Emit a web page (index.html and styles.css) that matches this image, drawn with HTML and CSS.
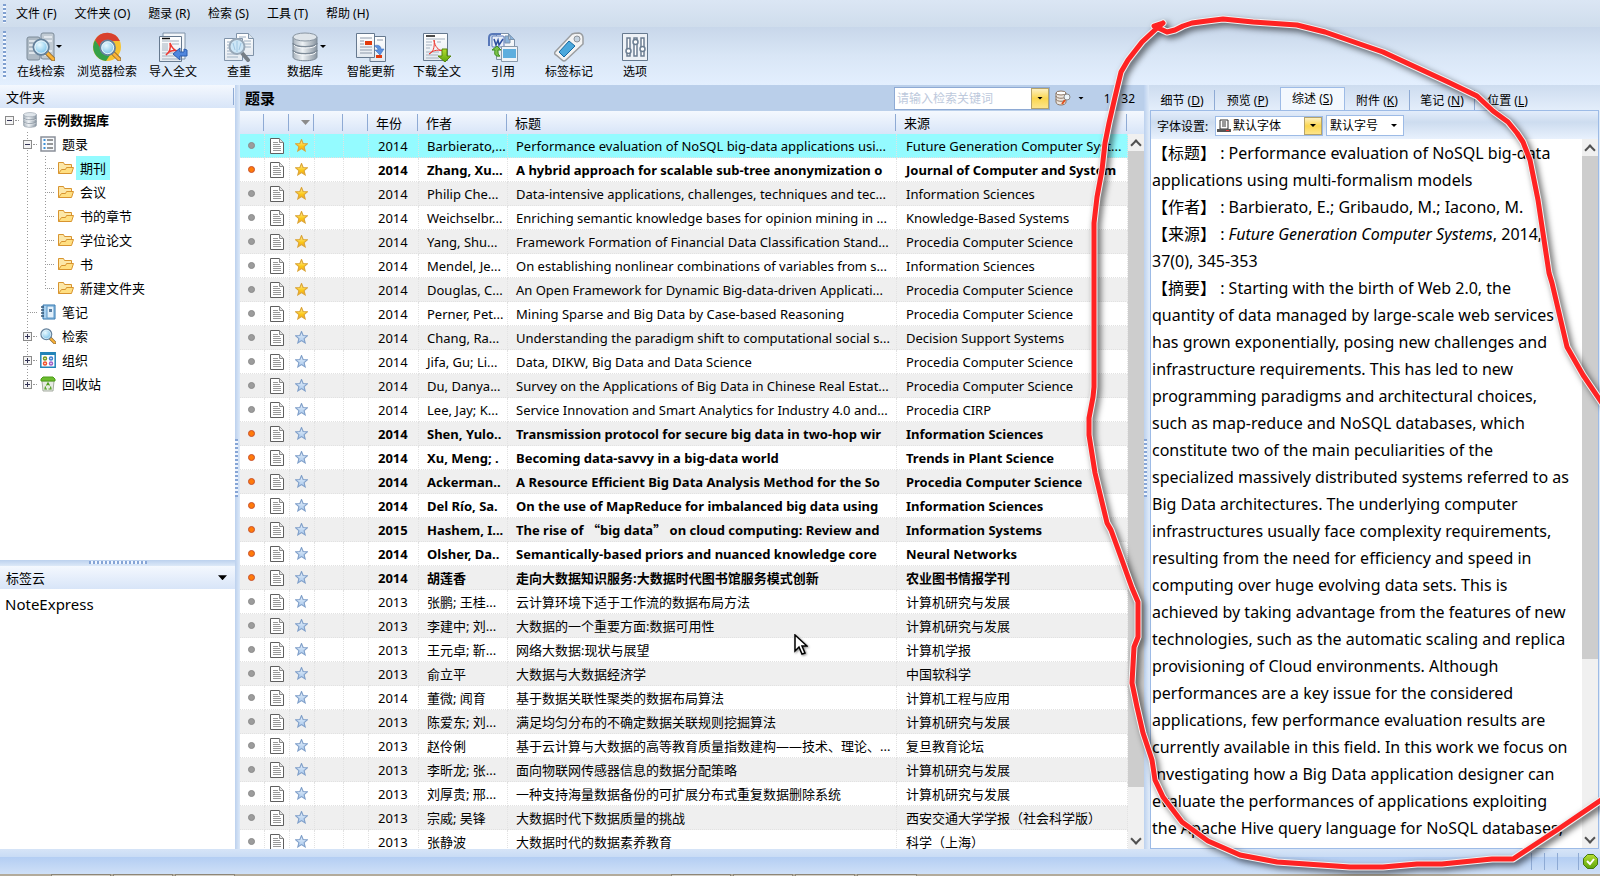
FILE: index.html
```html
<!DOCTYPE html>
<html lang="zh-CN">
<head>
    <meta charset="UTF-8">
    <meta name="viewport" content="width=device-width, initial-scale=1.0">
    <title>NoteExpress</title>
    <link rel="stylesheet" href="styles.css">
</head>
<body>
    <!-- shared icons -->
    <svg class="sprite" width="0" height="0" aria-hidden="true">
        <defs>
            <linearGradient id="g-metal" x1="0" x2="1" y1="0" y2="0">
                <stop offset="0" stop-color="#a9b3bd"/><stop offset=".4" stop-color="#eef2f5"/><stop offset="1" stop-color="#8995a1"/>
            </linearGradient>
            <linearGradient id="g-paper" x1="0" x2="0" y1="0" y2="1">
                <stop offset="0" stop-color="#fff"/><stop offset="1" stop-color="#e3e9f0"/>
            </linearGradient>
            <radialGradient id="g-glass" cx=".4" cy=".35" r=".7">
                <stop offset="0" stop-color="#e8f9ff"/><stop offset="1" stop-color="#6dbbe6"/>
            </radialGradient>
            <linearGradient id="g-gold" x1="0" x2="0" y1="0" y2="1">
                <stop offset="0" stop-color="#fff3a0"/><stop offset=".6" stop-color="#fcc917"/><stop offset="1" stop-color="#f0a020"/>
            </linearGradient>
            <linearGradient id="g-blue" x1="0" x2="0" y1="0" y2="1">
                <stop offset="0" stop-color="#e9f2fb"/><stop offset="1" stop-color="#a5c6ec"/>
            </linearGradient>
            <linearGradient id="g-green" x1="0" x2="0" y1="0" y2="1">
                <stop offset="0" stop-color="#b5dd31"/><stop offset="1" stop-color="#5da50b"/>
            </linearGradient>
        </defs>

        <symbol id="i-db" viewBox="0 0 26 30">
            <path d="M1 5v20c0 5 24 5 24 0V5z" fill="url(#g-metal)" stroke="#7d8a97"/>
            <path d="M1 11c0 5 24 5 24 0M1 18c0 5 24 5 24 0" fill="none" stroke="#7d8a97" stroke-width="1.5"/>
            <path d="M2 13c1 4 22 4 22 0M2 20c1 4 22 4 22 0" fill="none" stroke="#f6f8fa"/>
            <ellipse cx="13" cy="5" rx="12" ry="4" fill="#dfe5ea" stroke="#8a96a2"/>
        </symbol>
        <symbol id="i-glass" viewBox="0 0 24 24">
            <path d="M15 15l7 7" stroke="#8d6a35" stroke-width="5" stroke-linecap="round"/>
            <path d="M16 16l6 6" stroke="#fbb338" stroke-width="3" stroke-linecap="round"/>
            <circle cx="9.500" cy="9.500" r="8" fill="url(#g-glass)" stroke="#66829c" stroke-width="2"/>
            <circle cx="9.500" cy="9.500" r="6.500" fill="none" stroke="#f1f8fc"/>
        </symbol>
        <symbol id="i-online" viewBox="0 0 30 30">
            <rect x="1" y="5" width="13" height="23" rx="2" fill="#aebac5" stroke="#7c8b99"/>
            <rect x="15" y="1" width="13" height="26" rx="2" fill="#c1cbd4" stroke="#7c8b99"/>
            <path d="M3 9h8M3 13h8M3 17h8M3 21h8M18 5h8M18 9h8M18 19h8M18 23h8" stroke="#edf2f6" stroke-width="1.500"/>
            <use href="#i-glass" x="6" y="6" width="23" height="23"/>
        </symbol>
        <symbol id="i-browser" viewBox="0 0 30 30">
            <circle cx="15" cy="15" r="14" fill="#f6c332"/>
            <path d="M3 8A14 14 0 0 1 28 9H15L8 17z" fill="#d8412f"/>
            <path d="M3 8A14 14 0 0 0 14 29L20 20 9 17z" fill="#34a048"/>
            <circle cx="15" cy="15" r="7" fill="#e8f4fb"/>
            <use href="#i-glass" x="7" y="7" width="22" height="22"/>
        </symbol>
        <symbol id="i-import" viewBox="0 0 30 30">
            <path d="M5 1h22v26H5z" fill="#f4f7fa" stroke="#7f92a8"/>
            <path d="M1.500 4.500h22v25h-22z" fill="url(#g-paper)" stroke="#66798f"/>
            <path d="M4 6.500h8" stroke="#111" stroke-width="1.500"/>
            <path d="M4 9h17M4 12h6M4 14h6M4 16h6M4 18h6M4 21h17M4 24h17M4 27h17M14 12h7" stroke="#a4b1bf"/>
            <path d="M12 11c2 5 5 8 8 8-4-1-9 0-12 4 3-2 5-6 4-12z" fill="none" stroke="#ee3b33" stroke-width="1.500"/>
            <path d="M29 18v6h-7v4l-7-6 7-6v4h4v-3z" fill="#4f86dd" stroke="#2b5cae"/>
        </symbol>
        <symbol id="i-check" viewBox="0 0 30 30">
            <path d="M12.500 1.500h12l5 5v17h-17z" fill="url(#g-paper)" stroke="#7f92a8"/>
            <path d="M24.500 1.500v5h5" fill="#dce5ee" stroke="#7f92a8"/>
            <path d="M.500 6.500h18v22H.500z" fill="url(#g-paper)" stroke="#7f92a8"/>
            <path d="M15 5h7M20 9h7M21 12h6M21 15h6M3 10h4M3 13h3M3 16h3M3 19h4M3 22h11M3 25h11" stroke="#9eb0c2"/>
            <path d="M18 21l6 7" stroke="#767e86" stroke-width="4" stroke-linecap="round"/>
            <circle cx="13" cy="14.500" r="7.500" fill="#cde6f7" stroke="#98a8b8" stroke-width="2"/>
            <path d="M13 9v11M9 11l2 7M17 11l-2 7" stroke="#a0c6e2"/>
        </symbol>
        <symbol id="i-update" viewBox="0 0 30 30">
            <path d="M14 4.500h15.500v25H14z" fill="url(#g-paper)" stroke="#66798f"/>
            <path d="M.500 1.500h18v24H.500z" fill="url(#g-paper)" stroke="#66798f"/>
            <path d="M4 6h12M4 9h4M4 12h4M4 15h12M4 18h12M4 21h12M21 8h6" stroke="#8e9aab"/>
            <path d="M9 9h7v4H9zM20 23h6v3h-6z" fill="#e23a0c"/>
            <path d="M18 14c4-2 7 0 7 3h3l-4 6-5-5h3c0-2-2-3-4-4z" fill="#5c90df" stroke="#2d63b5" stroke-width=".500"/>
        </symbol>
        <symbol id="i-download" viewBox="0 0 30 30">
            <path d="M1.500 1.500h24v27h-24z" fill="url(#g-paper)" stroke="#66798f"/>
            <path d="M4 4h9" stroke="#111" stroke-width="1.500"/>
            <path d="M4 7h19M4 10h6M4 13h6M4 16h4M15 10h4M4 20h13M4 23h12M4 26h13" stroke="#a4b1bf"/>
            <path d="M12 8c1 7 4 10 9 11-6-2-11 0-14 3 4-1 6-7 5-14z" fill="none" stroke="#ee3b33" stroke-width="1"/>
            <path d="M20 17h5v7h4l-6 6-7-6h4z" fill="url(#g-green)" stroke="#55850a"/>
        </symbol>
        <symbol id="i-cite" viewBox="0 0 30 30">
            <path d="M8.500 1.500h12l6 6v20h-18z" fill="url(#g-paper)" stroke="#7f92a8"/>
            <path d="M20.500 1.500v6h6M17 4h5v7h-5z" fill="#8bb2da" stroke="#7b93ac"/>
            <path d="M1 14V6q0-4 4-4h8" fill="none" stroke="#5878b9" stroke-width="2"/>
            <rect x="4" y="4" width="12" height="11" rx="1" fill="#e8eef8" stroke="#5878b9"/>
            <path d="M6 7l2 6 2-5 1 5 4-6" fill="none" stroke="#2b4e9e" stroke-width="1.500"/>
            <path d="M12 24c-5 1-6-2-5-6H4l5-4 4 4h-3c0 3 0 5 2 6z" fill="#79c04a" stroke="#3c8d1f"/>
            <path d="M13.500 14.500h16v15h-16z" fill="#f0f4f8" stroke="#8999aa"/>
            <path d="M15 17h13v9H15z" fill="#5eaede"/>
        </symbol>
        <symbol id="i-tag" viewBox="0 0 30 30">
            <path d="M1 20L18 2q2-1 7-1 4 1 4 5v6L12 28q-2 2-4 0l-6-5q-2-1-1-3z" fill="#f3f3f3" stroke="#9a9da0" stroke-width="1.500"/>
            <circle cx="23" cy="7" r="3" fill="#c5d3e0" stroke="#8c9299"/>
            <path d="M5 20L15 9l6 5-11 11z" fill="#4ba8dc" stroke="#1769a0"/>
        </symbol>
        <symbol id="i-option" viewBox="0 0 30 30">
            <path d="M2.500 1.500h25v27h-25z" fill="#eef2f7" stroke="#66798f"/>
            <g fill="#fff" stroke="#6c7e92" stroke-width="1.500">
                <path d="M7 6h3v18H7zM14 6h3v18h-3zM21 6h3v18h-3z"/>
                <circle cx="8.500" cy="19" r="2.500"/><circle cx="15.500" cy="10" r="2.500"/><circle cx="22.500" cy="17" r="2.500"/>
            </g>
        </symbol>
        <symbol id="i-list" viewBox="0 0 16 16">
            <path d="M1 1h14v14H1z" fill="#f8fafc" stroke="#8a9099" stroke-width="1.500"/>
            <path d="M7 4h6M7 8h6M7 12h6" stroke="#333"/>
            <path d="M3.500 3h2v2h-2zM3.500 7h2v2h-2zM3.500 11h2v2h-2z" fill="#3c8fd6"/>
        </symbol>
        <symbol id="i-folder" viewBox="0 0 16 14">
            <path d="M.500 12.500v-11h5l1 2h7v3" fill="#fce7a8" stroke="#d8942f"/>
            <path d="M.500 12.500l3-4h4l1-2h7l-2 6z" fill="#ffdf82" stroke="#d8942f"/>
        </symbol>
        <symbol id="i-note" viewBox="0 0 16 16">
            <path d="M3 1h12v14H3z" fill="#a9d0ee" stroke="#2f74ae"/>
            <path d="M7 2h7v12H7z" fill="#e4f1fb" stroke="#5b97c8"/>
            <path d="M9 5h3v3H9z" fill="#5a7fa3"/>
            <path d="M1 3h3M1 6h3M1 9h3M1 12h3" stroke="#39597a" stroke-width="1.500"/>
        </symbol>
        <symbol id="i-group" viewBox="0 0 16 16">
            <path d="M.800.800h14.400v14.400H.800z" fill="#fff" stroke="#2384b8" stroke-width="1.500"/>
            <path d="M1 1h14v2H1z" fill="#2384b8"/>
            <g fill="none" stroke-width="1.500">
                <circle cx="5" cy="6.500" r="1.500" stroke="#7a9a1e"/><circle cx="11" cy="6.500" r="1.500" stroke="#3f7ed0"/>
                <circle cx="5" cy="11.500" r="1.500" stroke="#f0532d"/><circle cx="11" cy="11.500" r="1.500" stroke="#a25fc4"/>
            </g>
        </symbol>
        <symbol id="i-bin" viewBox="0 0 16 16">
            <path d="M2 5h12l-1 10H3z" fill="#e6eae3" stroke="#a5aca0"/>
            <path d="M1 5V3l2-2h10l2 2v2z" fill="#6cbc2e" stroke="#4c9d19"/>
            <path d="M6.500 9.500L8 7l1.500 2.500M10.500 10.500L11 13H8.500M5.500 10.500L5 13h2" fill="none" stroke="#4c9d19" stroke-width="1.200"/>
        </symbol>
        <symbol id="i-doc" viewBox="0 0 14 16">
            <path d="M.500.500h9l4 4v11H.500z" fill="#fff" stroke="#5f5f5f"/>
            <path d="M9.500.500v4h4" fill="#e6e6e6" stroke="#8a8a8a"/>
            <path d="M3 4.500h5M3 6.500h7M3 8.500h8M3 10.500h8M3 12.500h8" stroke="#999"/>
        </symbol>
        <symbol id="i-star" viewBox="0 0 12 12">
            <path d="M6 .500l1.500 3.700 4 .2-3.100 2.600 1 4L6 8.800 2.600 11l1-4L.500 4.400l4-.2z"/>
        </symbol>
        <symbol id="i-dbsearch" viewBox="0 0 16 16">
            <path d="M1 3v9c0 4 10 4 10 0V3z" fill="#eee7df" stroke="#8c7664"/>
            <path d="M1 6c0 3 10 3 10 0M1 9c0 3 10 3 10 0" fill="none" stroke="#8c7664"/>
            <ellipse cx="6" cy="3" rx="5" ry="2" fill="#fff" stroke="#8c7664"/>
            <path d="M10 10l-3 4" stroke="#e0501e" stroke-width="2"/>
            <circle cx="12" cy="7" r="3" fill="#edf5fa" stroke="#888"/>
        </symbol>
        <symbol id="i-printer" viewBox="0 0 14 14">
            <path d="M3 1h8v9H3z" fill="#fff" stroke="#333"/>
            <path d="M5 3h4M5 5h4M5 7h4" stroke="#333"/>
            <path d="M0 10h14v3H0z" fill="#555"/><path d="M9 11h3v1H9z" fill="#e33"/>
        </symbol>
        <symbol id="i-ok" viewBox="0 0 15 15">
            <path d="M4.500.500h6l4 4v6l-4 4h-6l-4-4v-6z" fill="url(#g-green)" stroke="#447710"/>
            <path d="M4 7l3 3 4-5" fill="none" stroke="#fff" stroke-width="2"/>
        </symbol>
    </svg>

    <div class="app">
        <nav class="menubar">
            <span class="grip"></span>
            <button>文件 (F)</button>
            <button>文件夹 (O)</button>
            <button>题录 (R)</button>
            <button>检索 (S)</button>
            <button>工具 (T)</button>
            <button>帮助 (H)</button>
        </nav>

        <div class="toolbar">
            <span class="grip"></span>
            <button class="drop"><svg><use href="#i-online"/></svg>在线检索</button>
            <button><svg><use href="#i-browser"/></svg>浏览器检索</button>
            <button><svg><use href="#i-import"/></svg>导入全文</button>
            <button><svg><use href="#i-check"/></svg>查重</button>
            <button class="drop"><svg><use href="#i-db"/></svg>数据库</button>
            <button><svg><use href="#i-update"/></svg>智能更新</button>
            <button><svg><use href="#i-download"/></svg>下载全文</button>
            <button><svg><use href="#i-cite"/></svg>引用</button>
            <button><svg><use href="#i-tag"/></svg>标签标记</button>
            <button><svg><use href="#i-option"/></svg>选项</button>
        </div>

        <main class="main">
            <aside class="sidebar">
                <h2 class="panel-head">文件夹</h2>
                <ul class="tree">
                    <li class="root"><div class="node"><i class="toggle minus"></i><svg><use href="#i-db"/></svg><b>示例数据库</b></div>
                        <ul>
                            <li><div class="node"><i class="toggle minus"></i><svg><use href="#i-list"/></svg><span>题录</span></div>
                                <ul class="folders">
                                    <li class="node"><svg><use href="#i-folder"/></svg><span class="selected">期刊</span></li>
                                    <li class="node"><svg><use href="#i-folder"/></svg><span>会议</span></li>
                                    <li class="node"><svg><use href="#i-folder"/></svg><span>书的章节</span></li>
                                    <li class="node"><svg><use href="#i-folder"/></svg><span>学位论文</span></li>
                                    <li class="node"><svg><use href="#i-folder"/></svg><span>书</span></li>
                                    <li class="node"><svg><use href="#i-folder"/></svg><span>新建文件夹</span></li>
                                </ul>
                            </li>
                            <li><div class="node"><i class="toggle none"></i><svg><use href="#i-note"/></svg><span>笔记</span></div></li>
                            <li><div class="node"><i class="toggle plus"></i><svg><use href="#i-glass"/></svg><span>检索</span></div></li>
                            <li><div class="node"><i class="toggle plus"></i><svg><use href="#i-group"/></svg><span>组织</span></div></li>
                            <li><div class="node"><i class="toggle plus"></i><svg><use href="#i-bin"/></svg><span>回收站</span></div></li>
                        </ul>
                    </li>
                </ul>
                <div class="hsplit"></div>
                <section class="tags">
                    <h2 class="panel-head">标签云<i class="caret"></i></h2>
                    <a class="tag" href="#">NoteExpress</a>
                </section>
            </aside>

            <div class="vsplit"></div>

            <section class="list">
                <header class="list-head">
                    <h1>题录</h1>
                    <div class="search">
                        <input type="text" placeholder="请输入检索关键词" aria-label="请输入检索关键词">
                        <button class="yellow" aria-label="展开"><i class="caret"></i></button>
                    </div>
                    <button class="find" aria-label="检索"><svg><use href="#i-dbsearch"/></svg><i class="caret"></i></button>
                    <span class="count">1 / 32</span>
                </header>
                <div class="list-body">
                    <table class="grid">
                        <colgroup>
                            <col class="c-icon"><col class="c-icon"><col class="c-icon"><col class="c-flag"><col class="c-icon">
                            <col class="c-year"><col class="c-author"><col><col class="c-source">
                        </colgroup>
                        <thead>
                            <tr><th></th><th></th><th class="sorted"><i class="caret"></i></th><th></th><th></th><th>年份</th><th>作者</th><th>标题</th><th>来源</th></tr>
                        </thead>
                        <tbody id="rows"></tbody>
                    </table>
                    <div class="scroll grid-scroll"><i class="up"></i><span class="thumb"></span><i class="down"></i></div>
                </div>
                <svg class="pointer" viewBox="0 0 14 21"><path d="M1 1v16l4-4 3 7 3-1-3-7h5z" fill="#fff" stroke="#000" stroke-width="1.500"/></svg>
            </section>

            <div class="vsplit"></div>

            <section class="detail">
                <div class="tabs" role="tablist">
                    <button role="tab">细节 (<u>D</u>)</button>
                    <button role="tab">预览 (<u>P</u>)</button>
                    <button role="tab" class="active" aria-selected="true">综述 (<u>S</u>)</button>
                    <button role="tab">附件 (<u>K</u>)</button>
                    <button role="tab">笔记 (<u>N</u>)</button>
                    <button role="tab">位置 (<u>L</u>)</button>
                </div>
                <div class="pane">
                    <div class="fontbar">
                        <label for="font">字体设置:</label>
                        <div class="combo face">
                            <svg><use href="#i-printer"/></svg>
                            <select id="font"><option>默认字体</option></select>
                            <span class="yellow"><i class="caret"></i></span>
                        </div>
                        <div class="combo size">
                            <select aria-label="默认字号"><option>默认字号</option></select>
                            <i class="caret"></i>
                        </div>
                    </div>
                    <div class="review">
                        <p>【标题】 : Performance evaluation of NoSQL big-data<br>
                        applications using multi-formalism models<br>
                        【作者】 : Barbierato, E.; Gribaudo, M.; Iacono, M.<br>
                        【来源】 : <em>Future Generation Computer Systems</em>, 2014,<br>
                        37(0), 345-353<br>
                        【摘要】 : Starting with the birth of Web 2.0, the<br>
                        quantity of data managed by large-scale web services<br>
                        has grown exponentially, posing new challenges and<br>
                        infrastructure requirements. This has led to new<br>
                        programming paradigms and architectural choices,<br>
                        such as map-reduce and NoSQL databases, which<br>
                        constitute two of the main peculiarities of the<br>
                        specialized massively distributed systems referred to as<br>
                        Big Data architectures. The underlying computer<br>
                        infrastructures usually face complexity requirements,<br>
                        resulting from the need for efficiency and speed in<br>
                        computing over huge evolving data sets. This is<br>
                        achieved by taking advantage from the features of new<br>
                        technologies, such as the automatic scaling and replica<br>
                        provisioning of Cloud environments. Although<br>
                        performances are a key issue for the considered<br>
                        applications, few performance evaluation results are<br>
                        currently available in this field. In this work we focus on<br>
                        investigating how a Big Data application designer can<br>
                        evaluate the performances of applications exploiting<br>
                        the Apache Hive query language for NoSQL databases,</p>
                        <div class="scroll review-scroll"><i class="up"></i><span class="thumb"></span><i class="down"></i></div>
                    </div>
                </div>
            </section>
        </main>

        <footer class="statusbar"><i></i><i></i><i></i><i></i><svg><use href="#i-ok"/></svg></footer>
        <div class="taskbar">
            <div><i></i><i></i><i></i></div>
            <div><i></i><i></i><i></i><i></i></div>
        </div>
    </div>

    <!-- hand-drawn marker round the detail pane -->
    <svg class="marker" viewBox="0 0 530 876" aria-hidden="true">
        <defs>
            <path id="ring" d="M93 23L84 26L97 32L105 30L113 26L122 23L137 21L153 19L183 22L227 25L255 32L313 52L378 82L407 96L423 111L438 122L447 133L453 142L460 160L468 200L471 220L479 273L482 283L497 347L513 375L534 406M93 23L87 28L72 42L58 60L51 72L45 97L39 123L35 143L32 170L27 197L24 223L24 387L23 397L19 418L19 435L25 473L37 523L41 530L53 563L62 588L68 602L68 637L64 647L62 683L67 707L73 733L82 760L85 780L93 797L112 822L138 841L170 855L207 862L280 867L313 867L347 864L372 864L422 859L443 859L487 830L534 798"/>
        </defs>
        <g fill="none" stroke-linejoin="round" stroke-linecap="round">
            <use href="#ring" stroke="#f1f1f1" stroke-width="7"/>
            <use href="#ring" stroke="#ff2323" stroke-width="5"/>
        </g>
    </svg>

    <script>
        // [unread, starred, year, author, title, source]
        const records = [
            [0, 1, 2014, 'Barbierato,...', 'Performance evaluation of NoSQL big-data applications usi...', 'Future Generation Computer Syst...'],
            [1, 1, 2014, 'Zhang, Xu...', 'A hybrid approach for scalable sub-tree anonymization o', 'Journal of Computer and System'],
            [0, 1, 2014, 'Philip Che...', 'Data-intensive applications, challenges, techniques and tec...', 'Information Sciences'],
            [0, 1, 2014, 'Weichselbr...', 'Enriching semantic knowledge bases for opinion mining in ...', 'Knowledge-Based Systems'],
            [0, 1, 2014, 'Yang, Shu...', 'Framework Formation of Financial Data Classification Stand...', 'Procedia Computer Science'],
            [0, 1, 2014, 'Mendel, Je...', 'On establishing nonlinear combinations of variables from s...', 'Information Sciences'],
            [0, 1, 2014, 'Douglas, C...', 'An Open Framework for Dynamic Big-data-driven Applicati...', 'Procedia Computer Science'],
            [0, 1, 2014, 'Perner, Pet...', 'Mining Sparse and Big Data by Case-based Reasoning', 'Procedia Computer Science'],
            [0, 0, 2014, 'Chang, Ra...', 'Understanding the paradigm shift to computational social s...', 'Decision Support Systems'],
            [0, 0, 2014, 'Jifa, Gu; Li...', 'Data, DIKW, Big Data and Data Science', 'Procedia Computer Science'],
            [0, 0, 2014, 'Du, Danya...', 'Survey on the Applications of Big Data in Chinese Real Estat...', 'Procedia Computer Science'],
            [0, 0, 2014, 'Lee, Jay; K...', 'Service Innovation and Smart Analytics for Industry 4.0 and...', 'Procedia CIRP'],
            [1, 0, 2014, 'Shen, Yulo..', 'Transmission protocol for secure big data in two-hop wir', 'Information Sciences'],
            [1, 0, 2014, 'Xu, Meng; .', 'Becoming data-savvy in a big-data world', 'Trends in Plant Science'],
            [1, 0, 2014, 'Ackerman..', 'A Resource Efficient Big Data Analysis Method for the So', 'Procedia Computer Science'],
            [1, 0, 2014, 'Del Río, Sa.', 'On the use of MapReduce for imbalanced big data using', 'Information Sciences'],
            [1, 0, 2015, 'Hashem, I...', 'The rise of <span class="quote">“</span>big data<span class="quote">”</span> on cloud computing: Review and', 'Information Systems'],
            [1, 0, 2014, 'Olsher, Da..', 'Semantically-based priors and nuanced knowledge core', 'Neural Networks'],
            [1, 0, 2014, '胡莲香', '走向大数据知识服务:大数据时代图书馆服务模式创新', '农业图书情报学刊'],
            [0, 0, 2013, '张鹏; 王桂...', '云计算环境下适于工作流的数据布局方法', '计算机研究与发展'],
            [0, 0, 2013, '李建中; 刘...', '大数据的一个重要方面:数据可用性', '计算机研究与发展'],
            [0, 0, 2013, '王元卓; 靳...', '网络大数据:现状与展望', '计算机学报'],
            [0, 0, 2013, '俞立平', '大数据与大数据经济学', '中国软科学'],
            [0, 0, 2014, '董微; 闻育', '基于数据关联性聚类的数据布局算法', '计算机工程与应用'],
            [0, 0, 2013, '陈爱东; 刘...', '满足均匀分布的不确定数据关联规则挖掘算法', '计算机研究与发展'],
            [0, 0, 2013, '赵伶俐', '基于云计算与大数据的高等教育质量指数建构——技术、理论、...', '复旦教育论坛'],
            [0, 0, 2013, '李昕龙; 张...', '面向物联网传感器信息的数据分配策略', '计算机研究与发展'],
            [0, 0, 2013, '刘厚贵; 邢...', '一种支持海量数据备份的可扩展分布式重复数据删除系统', '计算机研究与发展'],
            [0, 0, 2013, '宗威; 吴锋', '大数据时代下数据质量的挑战', '西安交通大学学报（社会科学版）'],
            [0, 0, 2013, '张静波', '大数据时代的数据素养教育', '科学（上海）']
        ];

        document.getElementById('rows').innerHTML = records.map(([unread, starred, year, author, title, source]) => `
            <tr class="${unread ? 'unread' : ''}">
                <td><i class="dot"></i></td>
                <td><svg class="doc"><use href="#i-doc"/></svg></td>
                <td><svg class="star ${starred ? 'on' : ''}"><use href="#i-star"/></svg></td>
                <td></td><td></td>
                <td>${year}</td><td>${author}</td><td>${title}</td><td>${source}</td>
            </tr>`).join('');
    </script>
</body>
</html>
```

FILE: styles.css
```css
* {
    box-sizing: border-box;
}

body {
    margin: 0;
    height: 100vh;
    overflow: hidden;
    position: relative;
    font-family: "Noto Sans", "Noto Sans CJK SC", sans-serif;
    font-size: 13px;
    color: #000;
}

button, input, select {
    font: inherit;
    color: inherit;
    margin: 0;
    padding: 0;
    border: 0;
    background: none;
    border-radius: 0;
}

h1, h2, p, ul {
    margin: 0;
    padding: 0;
    list-style: none;
    font-weight: normal;
}

.sprite {
    position: absolute;
}

.app {
    display: flex;
    flex-direction: column;
    height: 100%;
}

.caret {
    display: block;
    width: 6px;
    height: 3px;
    background: #000;
    clip-path: polygon(0 0, 100% 0, 50% 100%);
}

/* menu and toolbar */
.grip {
    width: 3px;
    align-self: stretch;
    margin: 4px 4px 4px 3px;
    background: repeating-linear-gradient(#7f9fd0 0 2px, #f3f8ff 2px 4px);
}

.menubar {
    display: flex;
    align-items: center;
    height: 27px;
    flex: none;
    font-size: 12px;
    background: linear-gradient(#dbe6f4, #cfddec);
}

.menubar button {
    padding: 0 8px;
    margin-left: 2px;
    line-height: 24px;
}

.menubar .grip {
    margin-right: 0;
}

.toolbar {
    display: flex;
    height: 58px;
    flex: none;
    font-size: 12px;
    background: linear-gradient(#c8d7ea, #d9e6f6 50%, #e3effe);
}

.toolbar .grip {
    margin: 4px 2px 6px 3px;
}

.toolbar button {
    position: relative;
    width: 66px;
    display: flex;
    flex-direction: column;
    align-items: center;
    padding-top: 5px;
    line-height: 18px;
    white-space: nowrap;
}

.toolbar svg {
    width: 30px;
    height: 30px;
    margin-bottom: 1px;
}

.toolbar .drop::after {
    content: "";
    position: absolute;
    left: 48px;
    top: 18px;
    width: 6px;
    height: 3px;
    background: #000;
    clip-path: polygon(0 0, 100% 0, 50% 100%);
}

/* three panes */
.main {
    display: flex;
    flex: 1;
    min-height: 0;
    background: #fff;
}

.vsplit {
    flex: none;
    width: 5px;
    background: linear-gradient(90deg, #bcd1ee, #dde9f8);
    display: flex;
    align-items: center;
}

.vsplit::before {
    content: "";
    width: 3px;
    height: 58px;
    margin-top: 2px;
    background: repeating-linear-gradient(#86a5d6 0 2px, #f0f6ff 2px 4px);
}

.sidebar {
    width: 235px;
    flex: none;
    display: flex;
    flex-direction: column;
}

.panel-head {
    display: flex;
    align-items: center;
    justify-content: space-between;
    height: 23px;
    padding: 0 8px 0 6px;
    font-size: 13px;
    background: linear-gradient(#8eaad4, #8eaad4) calc(100% - 1px) 50% / 1px 17px no-repeat, linear-gradient(#f4f8fe, #d8e5f8);
}

.tags .panel-head {
    background: linear-gradient(#f4f8fe, #d8e5f8);
}

.panel-head .caret {
    width: 9px;
    height: 5px;
}

.tree {
    flex: 1;
    min-height: 0;
    overflow: hidden;
}

.node {
    display: flex;
    align-items: center;
    height: 24px;
    white-space: nowrap;
}

.node svg {
    width: 16px;
    height: 16px;
    flex: none;
    margin-right: 2px;
}

.node span, .node b {
    padding: 0 4px;
    line-height: 24px;
}

.node .selected {
    background: #94fbff;
}

.root > .node {
    padding-left: 5px;
}

.root > ul {
    margin-left: 27px;
    background: repeating-linear-gradient(#999 0 1px, transparent 1px 3px) 0 0 / 1px calc(100% - 12px) no-repeat;
}

.root > ul .toggle {
    margin-left: -4px;
}

.toggle {
    position: relative;
    width: 9px;
    height: 9px;
    flex: none;
    margin-right: 8px;
    border: 1px solid #8a8a8a;
    background: linear-gradient(#335, #335) center / 5px 1px no-repeat, #f4f4f4;
}

.toggle::after {
    content: "";
    position: absolute;
    left: 9px;
    top: 3px;
    width: 4px;
    border-top: 1px dotted #999;
}

.toggle.plus {
    background: linear-gradient(#335, #335) center / 5px 1px no-repeat, linear-gradient(#335, #335) center / 1px 5px no-repeat, #f4f4f4;
}

.toggle.none {
    border-color: transparent;
    background: none;
}

.toggle.none::after {
    left: 3px;
    width: 10px;
}

.folders {
    margin-left: 18px;
    background: repeating-linear-gradient(#999 0 1px, transparent 1px 3px) 0 0 / 1px calc(100% - 12px) no-repeat;
}

.folders .node::before {
    content: "";
    width: 9px;
    margin-right: 4px;
    border-top: 1px dotted #999;
}

.folders svg {
    height: 14px;
}

.hsplit {
    height: 6px;
    flex: none;
    display: flex;
    justify-content: center;
    background: linear-gradient(#bcd1ee, #dde9f8);
}

.hsplit::before {
    content: "";
    width: 58px;
    height: 3px;
    margin-top: 1px;
    background: repeating-linear-gradient(90deg, #86a5d6 0 2px, #f0f6ff 2px 4px);
}

.tags {
    height: 37%;
    flex: none;
}

.tag {
    display: block;
    padding: 3px 5px;
    font-size: 15px;
    line-height: 24px;
    color: inherit;
    text-decoration: none;
}

/* record list */
.list {
    position: relative;
    flex: 1;
    min-width: 0;
    display: flex;
    flex-direction: column;
}

.list-head {
    display: flex;
    align-items: center;
    height: 26px;
    flex: none;
    padding: 0 9px 0 5px;
    background: #bacfea;
}

.list-head h1 {
    flex: 1;
    font-size: 15px;
    line-height: 22px;
    font-weight: bold;
}

.search {
    display: flex;
    width: 156px;
    height: 23px;
    border: 1px solid #8eaad4;
    background: #fff;
}

.search input {
    flex: 1;
    min-width: 0;
    padding-left: 2px;
    font-size: 12px;
}

.search input::placeholder {
    color: #bdc9dc;
}

.yellow {
    width: 18px;
    flex: none;
    display: flex;
    align-items: center;
    justify-content: center;
    border: 1px solid #b5a36b;
    background: linear-gradient(#fdf0c0, #fbd64f 50%, #fde58b);
}

.find {
    display: flex;
    align-items: center;
    gap: 7px;
    margin-left: 5px;
}

.find svg {
    width: 16px;
    height: 16px;
}

.count {
    width: 51px;
    text-align: right;
    font-size: 12px;
}

.list-body {
    flex: 1;
    min-height: 0;
    display: flex;
    overflow: hidden;
    background: linear-gradient(#f4f8fe, #d8e5f8) 0 0 / 100% 23px no-repeat;
}

.grid {
    width: 100%;
    min-width: 0;
    align-self: flex-start;
    table-layout: fixed;
    border-collapse: separate;
    border-spacing: 0;
}

.c-icon { width: 25px; }
.c-flag { width: 29px; }
.c-year { width: 50px; }
.c-author { width: 89px; }
.c-source { width: 231px; }

.grid th {
    height: 23px;
    padding: 0 7px;
    font-weight: normal;
    text-align: left;
    background: linear-gradient(#8eaad4, #8eaad4) calc(100% - 1px) 50% / 1px 17px no-repeat;
}

.grid th.sorted .caret {
    width: 9px;
    height: 5px;
    margin-left: 4px;
    background: #8b8b8b;
}

.grid td {
    height: 24px;
    padding: 2px 0 0 8px;
    line-height: 21px;
    white-space: nowrap;
    overflow: hidden;
    border-right: 1px dotted #e2e2e2;
    border-bottom: 1px dotted #e2e2e2;
}

.grid td:nth-child(-n+3) {
    padding: 0;
}

.grid td:nth-child(6), .grid td:last-child {
    padding-left: 9px;
}

.grid tr:nth-child(odd) td {
    background: #efefef;
}

.grid tbody tr:first-child td {
    background: #94fbff;
}

.quote {
    font-family: "Noto Sans CJK SC", sans-serif;
    line-height: 1;
}

.unread td {
    font-weight: bold;
}

.dot {
    display: block;
    width: 7px;
    height: 7px;
    margin: 0 8px;
    border-radius: 50%;
    background: #9c9c9c;
    border: 1px solid #8a8a8a;
}

.unread .dot {
    background: #ff7a0a;
    border-color: #c8502c;
}

.doc {
    display: block;
    width: 14px;
    height: 16px;
    margin: 0 5px;
}

.star {
    display: block;
    width: 13px;
    height: 13px;
    margin: 0 5px;
    fill: url(#g-blue);
    stroke: #7f9fc9;
}

.star.on {
    fill: url(#g-gold);
    stroke: #dba436;
}

.scroll {
    flex: none;
    width: 16px;
    display: flex;
    flex-direction: column;
    background: #f0f0f0;
}

.scroll i {
    height: 17px;
    flex: none;
    display: flex;
    align-items: center;
    justify-content: center;
}

.scroll i::before {
    content: "";
    width: 6px;
    height: 6px;
    border: solid #505050;
    border-width: 2px 0 0 2px;
    rotate: 45deg;
    translate: 0 2px;
}

.scroll .down::before {
    rotate: 225deg;
    translate: 0 -2px;
}

.thumb {
    background: #cdcdcd;
}

.scroll .down {
    margin-top: auto;
}

.grid-scroll {
    margin-top: 23px;
}

.grid-scroll .thumb {
    height: 89%;
}

.pointer {
    position: absolute;
    left: 554px;
    top: 549px;
    width: 14px;
    height: 21px;
    filter: drop-shadow(1px 1px 1px #888);
}

/* detail pane */
.detail {
    width: 451px;
    flex: none;
    display: flex;
    flex-direction: column;
    padding-left: 1px;
    background: linear-gradient(#cddcef, #e4eefb) 0 0 / 100% 26px no-repeat, #dde9f8;
}

.tabs {
    display: flex;
    align-items: flex-end;
    height: 25px;
    flex: none;
    font-size: 12px;
}

.tabs button {
    width: 65px;
    height: 20px;
    line-height: 20px;
    padding-top: 1px;
    border-right: 1px solid #8eaad4;
    white-space: nowrap;
}

.tabs button:nth-child(2), .tabs button:last-child {
    border-right: 0;
}

.tabs .active {
    height: 23px;
    line-height: 22px;
    padding-top: 0;
    border: 1px solid #9dbbe6;
    border-bottom: 0;
    background: #f3f8fe;
}

.pane {
    flex: 1;
    min-height: 0;
    display: flex;
    flex-direction: column;
    margin-right: 1px;
    border: 1px solid #9dbbe6;
}

.fontbar {
    display: flex;
    align-items: center;
    gap: 3px;
    height: 28px;
    flex: none;
    padding: 1px 6px 0;
    font-size: 12px;
    background: linear-gradient(#e3edfb, #cddcef 40%, #e8f1fd);
}

.fontbar label {
    width: 55px;
    white-space: nowrap;
}

.combo {
    display: flex;
    align-items: center;
    background: #fff;
    border: 1px solid #9dbbe6;
}

.combo select {
    flex: 1;
    min-width: 0;
    padding: 0 3px;
    appearance: none;
}

.combo svg {
    width: 14px;
    height: 14px;
    margin-left: 1px;
}

.face {
    width: 108px;
    height: 20px;
}

.face select {
    padding: 0 2px;
}

.face .yellow {
    height: 18px;
}

.size {
    width: 78px;
    height: 21px;
    padding-right: 6px;
}

.review {
    flex: 1;
    min-height: 0;
    display: flex;
    overflow: hidden;
    background: #fff;
}

.review p {
    flex: 1;
    min-width: 0;
    padding: 1px 0 0 1px;
    font-size: 16px;
    line-height: 27px;
    white-space: nowrap;
    overflow: hidden;
}

.review-scroll .thumb {
    height: 71%;
}

/* bottom bars */
.statusbar {
    display: flex;
    align-items: center;
    justify-content: flex-end;
    gap: 12px;
    height: 25px;
    flex: none;
    padding-right: 2px;
    background: linear-gradient(#d6e4f7, #c9dcf5 30%, #b4cef3 34%, #cfe0f7);
}

.statusbar i {
    width: 1px;
    height: 17px;
    background: #8eaad4;
}

.statusbar i:nth-child(4) {
    margin-left: 8px;
}

.statusbar svg {
    width: 15px;
    height: 15px;
    margin-left: -8px;
}

.taskbar {
    display: flex;
    height: 2px;
    flex: none;
    padding-left: 51px;
    background: #b3ab9b;
}

.taskbar div {
    display: flex;
    gap: 2px;
    width: 620px;
}

.taskbar i {
    width: 60px;
    border: 1px solid #8d8677;
    border-bottom: 0;
    background: #d5d0c6;
}

.marker {
    position: absolute;
    right: 0;
    top: 0;
    width: 530px;
    height: 876px;
    overflow: hidden;
    pointer-events: none;
    filter: drop-shadow(3px 3px 3px rgba(0, 0, 0, 0.6));
}
```
